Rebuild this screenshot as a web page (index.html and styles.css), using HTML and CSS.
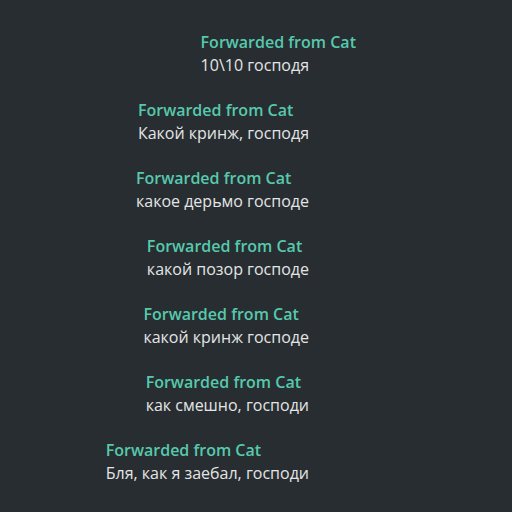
FILE: index.html
```html
<!DOCTYPE html>
<html lang="ru">
<head>
<meta charset="UTF-8">
<title>Forwarded</title>
<link rel="stylesheet" href="styles.css">
</head>
<body>
    <div class="chat">
        <div class="message">
            <div class="forwarded">Forwarded from Cat</div>
            <div class="text">10\10 господя</div>
        </div>
        <div class="message">
            <div class="forwarded">Forwarded from Cat</div>
            <div class="text">Какой кринж, господя</div>
        </div>
        <div class="message">
            <div class="forwarded">Forwarded from Cat</div>
            <div class="text">какое дерьмо господе</div>
        </div>
        <div class="message">
            <div class="forwarded">Forwarded from Cat</div>
            <div class="text">какой позор господе</div>
        </div>
        <div class="message">
            <div class="forwarded">Forwarded from Cat</div>
            <div class="text">какой кринж господе</div>
        </div>
        <div class="message">
            <div class="forwarded">Forwarded from Cat</div>
            <div class="text">как смешно, господи</div>
        </div>
        <div class="message">
            <div class="forwarded">Forwarded from Cat</div>
            <div class="text">Бля, как я заебал, господи</div>
        </div>
    </div>
</body>
</html>
```

FILE: styles.css
```css
body {
    margin: 0;
    background-color: #282d31;
    font-family: "Open Sans", sans-serif;
}

.chat {
    display: flex;
    flex-direction: column;
    align-items: flex-end;
    gap: 22px;
    padding: 31px 203px 0 0;
    height: 512px;
    box-sizing: border-box;
}

.message {
    font-size: 16px;
    line-height: 23px;
}

.forwarded {
    color: #56c9ad;
    font-weight: 600;
    white-space: nowrap;
    width: 0;
}

.text {
    color: #e3e5e6;
    white-space: nowrap;
}
```
